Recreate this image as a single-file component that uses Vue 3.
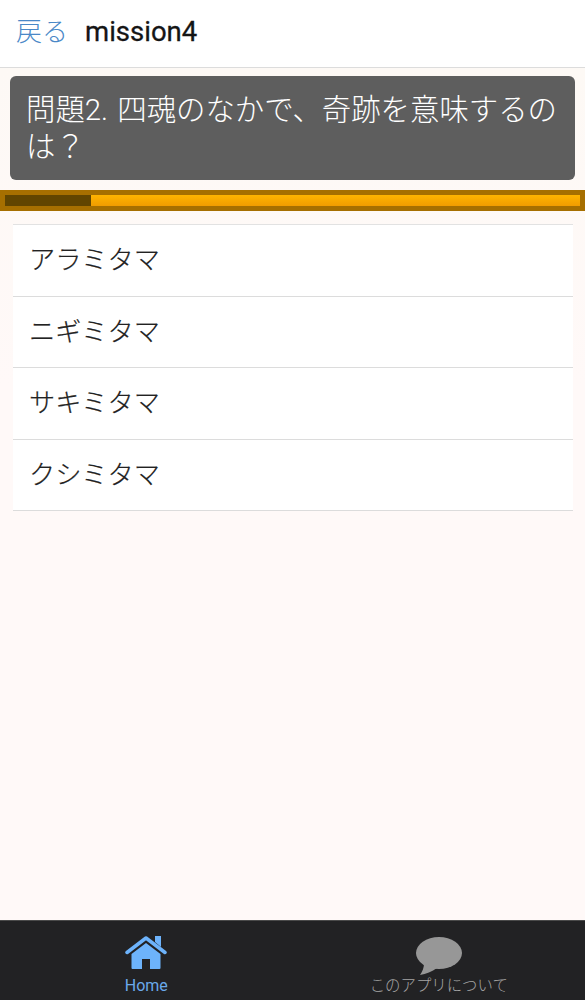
<template>
  <div class="page">
    <header class="navbar">
      <a class="back">戻る</a>
      <span class="title">mission4</span>
    </header>

    <main class="content">
      <div class="question">{{ question }}</div>

      <div class="timer">
        <div class="timer-used"></div>
        <div class="timer-left"></div>
      </div>

      <ul class="answers">
        <li v-for="a in answers" :key="a" class="answer">{{ a }}</li>
      </ul>
    </main>

    <nav class="tabbar">
      <div class="tab tab-active">
        <svg class="tab-icon" width="42" height="33" viewBox="0 0 42 33">
          <path d="M30 0h6v11l-6-5z" fill="#6db3fb" />
          <path d="M2 16.500 21 2l19 14.500" fill="none" stroke="#6db3fb" stroke-width="3.500" stroke-linecap="round" stroke-linejoin="round" />
          <path d="M6.500 18 21 7l14.500 11v14a1 1 0 0 1-1 1H25V23h-8v10H7.500a1 1 0 0 1-1-1z" fill="#6db3fb" />
        </svg>
        <span>Home</span>
      </div>
      <div class="tab">
        <svg class="tab-icon" width="46" height="38" viewBox="0 0 46 38">
          <ellipse cx="23" cy="16" rx="23" ry="16" fill="#979797" />
          <path d="M8 26 C8 31 6.500 34.500 4 38 C10 37 16 34.500 21 31z" fill="#979797" />
        </svg>
        <span>このアプリについて</span>
      </div>
    </nav>
  </div>
</template>

<script setup>
const question = '問題2. 四魂のなかで、奇跡を意味するのは\uFF1F'
const answers = ['アラミタマ', 'ニギミタマ', 'サキミタマ', 'クシミタマ']
</script>

<style>
html,
body {
  margin: 0;
  padding: 0;
}
</style>

<style scoped>
.page {
  width: 585px;
  height: 1000px;
  display: flex;
  flex-direction: column;
  background: #fffafa;
  font-family: Roboto, "Noto Sans CJK JP", sans-serif;
  overflow: hidden;
}

.navbar {
  height: 67px;
  flex: none;
  display: flex;
  align-items: center;
  padding: 0 16px;
  gap: 17px;
  background: #fff;
  border-bottom: 1px solid #dcdcdc;
  box-sizing: content-box;
}

.back {
  color: #4a88c7;
  font-size: 26px;
  font-weight: 300;
  margin-top: -8px;
}

.title {
  color: #151515;
  font-size: 27.500px;
  font-weight: 400;
  margin-top: -4px;
  -webkit-text-stroke: 0.300px #151515;
}

.content {
  flex: 1;
  min-height: 0;
  padding-top: 8px;
  background: linear-gradient(#fdf9f5, #fff9f8 320px);
}

.question {
  margin: 0 10px;
  height: 104px;
  box-sizing: border-box;
  padding: 16px 16px 0;
  background: #5e5e5e;
  border-radius: 6px;
  color: #fff;
  font-size: 29.400px;
  font-weight: 300;
  line-height: 37px;
  word-spacing: 2px;
}

.timer {
  margin-top: 10px;
  height: 21px;
  box-sizing: border-box;
  padding: 5px;
  display: flex;
  background: #a66f00;
}

.timer-used {
  width: 86px;
  background: #614500;
}

.timer-left {
  flex: 1;
  background: linear-gradient(#ffb400, #f09c00);
}

.answers {
  list-style: none;
  margin: 13px 12px 0 13px;
  padding: 0;
  border-top: 1px solid #e2e2e2;
}

.answer {
  height: 66.500px;
  display: flex;
  align-items: center;
  padding: 0 0 4px 16px;
  background: #fff;
  border-bottom: 1px solid #dcdcdc;
  color: #222;
  font-size: 26.200px;
  font-weight: 300;
  -webkit-text-stroke: 0.200px #222;
}

.tabbar {
  height: 80px;
  flex: none;
  display: flex;
  background: #222224;
  border-top: 1px solid #4a4a4a;
  box-sizing: border-box;
}

.tab {
  flex: 1;
  position: relative;
  display: flex;
  flex-direction: column;
  align-items: center;
  color: #a5a5a5;
  font-size: 15.400px;
  font-weight: 300;
  padding-top: 16px;
}

.tab span {
  position: absolute;
  bottom: 5px;
  white-space: nowrap;
}

.tab-active {
  color: #6aa9ea;
  font-size: 16px;
  font-weight: 400;
  padding-top: 15px;
}

.tab-icon {
  display: block;
}
</style>
